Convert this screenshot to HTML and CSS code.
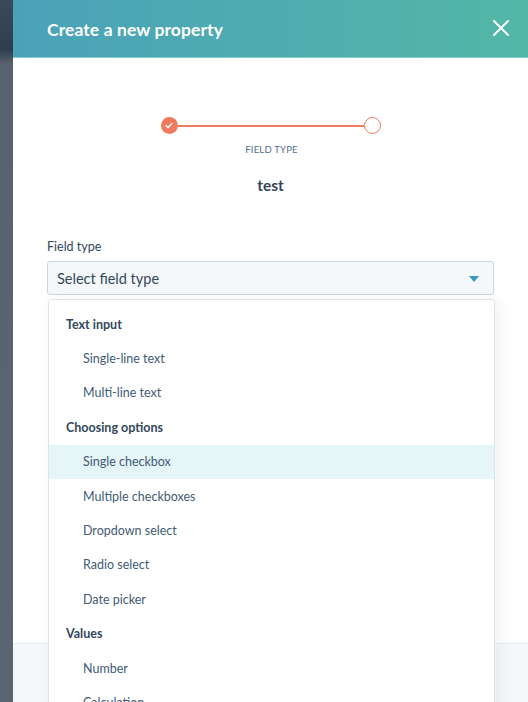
FILE: index.html
```html
<!DOCTYPE html>
<html>
<head>
<meta charset="utf-8">
<link rel="stylesheet" href="styles.css">
</head>
<body>
<div class="app">
  <div class="backdrop"></div>
  <div class="panel">
    <header class="header">
      <h1 class="title">Create a new property</h1>
      <svg class="close" width="16" height="16" viewBox="0 0 16 16"><path d="M1 1L15 15M15 1L1 15" stroke="#fff" stroke-width="2" stroke-linecap="round"/></svg>
    </header>
    <div class="body">
      <div class="stepper">
        <div class="track">
          <span class="dot done"><svg width="8" height="7" viewBox="0 0 8 7"><path d="M1 3.6L3 5.5L7 1.5" fill="none" stroke="#fff" stroke-width="1.4" stroke-linecap="round" stroke-linejoin="round"/></svg></span>
          <span class="line"></span>
          <span class="dot open"></span>
        </div>
        <div class="step-label">FIELD TYPE</div>
      </div>
      <div class="name">test</div>
      <label class="field-label">Field type</label>
      <div class="select">
        <span>Select field type</span>
        <span class="caret"></span>
      </div>
    </div>
    <div class="spacer"></div>
    <footer class="footer"></footer>
    <div class="menu">
      <div class="group">Text input</div>
      <div class="item">Single-line text</div>
      <div class="item">Multi-line text</div>
      <div class="group">Choosing options</div>
      <div class="item active">Single checkbox</div>
      <div class="item">Multiple checkboxes</div>
      <div class="item">Dropdown select</div>
      <div class="item">Radio select</div>
      <div class="item">Date picker</div>
      <div class="group">Values</div>
      <div class="item">Number</div>
      <div class="item">Calculation</div>
    </div>
  </div>
</div>
</body>
</html>
```

FILE: styles.css
```css
* { box-sizing: border-box; }
html, body { margin: 0; padding: 0; height: 100%; overflow: hidden; }
body { font-family: Lato, "Open Sans", sans-serif; color: #33475b; }
.app { display: flex; height: 702px; }
.backdrop {
  width: 13px;
  flex: none;
  background: linear-gradient(to bottom, #3a4a5a 0px, #2f3e4e 50px, #59636f 64px, #5a6571 100%);
}
.panel {
  flex: 1;
  position: relative;
  display: flex;
  flex-direction: column;
  background: #fff;
}
.header {
  height: 58px;
  flex: none;
  display: flex;
  align-items: center;
  justify-content: space-between;
  padding: 0 19px 0 34px;
  background: linear-gradient(to right, #4aa2b9, #53b7a7);
  border-bottom: 1px solid #7fd1cc;
}
.title { margin: 0; color: #fff; font-size: 17.5px; font-weight: 700; letter-spacing: 0.1px; padding-top: 2px; }
.close { display: block; margin-top: -1px; }
.body { padding: 0 34px; }
.stepper { display: flex; flex-direction: column; align-items: center; padding-top: 59px; }
.track { display: flex; align-items: center; width: 220px; }
.dot { width: 17px; height: 17px; border-radius: 50%; flex: none; display: flex; align-items: center; justify-content: center; }
.dot.done { background: #ef7a5e; }
.dot.open { border: 1.5px solid #ef7a5e; background: #fff; }
.line { flex: 1; height: 2px; background: #ef7a5e; }
.step-label { font-size: 9.5px; color: #516f90; margin-top: 10px; letter-spacing: 0.2px; margin-left: 2px; }
.name { text-align: center; font-size: 15.5px; font-weight: 700; margin-top: 21px; color: #33475b; }
.field-label { display: block; font-size: 12.5px; margin-top: 45px; color: #33475b; }
.select {
  margin-top: 7px;
  height: 34px;
  border: 1px solid #cbd6e2;
  border-radius: 3px;
  background: #f5f8fa;
  display: flex;
  align-items: center;
  justify-content: space-between;
  padding: 0 14px 0 9px;
  font-size: 14.5px;
  color: #33475b;
}
.caret { width: 0; height: 0; border-left: 5px solid transparent; border-right: 5px solid transparent; border-top: 6px solid #3a9ab8; margin-top: 1px; }
.spacer { flex: 1; }
.footer { height: 59px; flex: none; background: #f5f8fa; border-top: 1px solid #e5eaf0; }
.menu {
  position: absolute;
  left: 35px;
  top: 299px;
  width: 447px;
  height: 420px;
  background: #fff;
  border: 1px solid #dfe3eb;
  border-radius: 3px;
  padding-top: 7px;
  box-shadow: 4px 2px 14px rgba(45, 62, 80, 0.08);
}
.group, .item { height: 34.4px; display: flex; align-items: center; font-size: 12.5px; }
.group { padding-left: 17px; font-weight: 700; color: #33475b; }
.item { padding-left: 34px; color: #425b76; }
.item.active { background: #e5f5f8; }
```
